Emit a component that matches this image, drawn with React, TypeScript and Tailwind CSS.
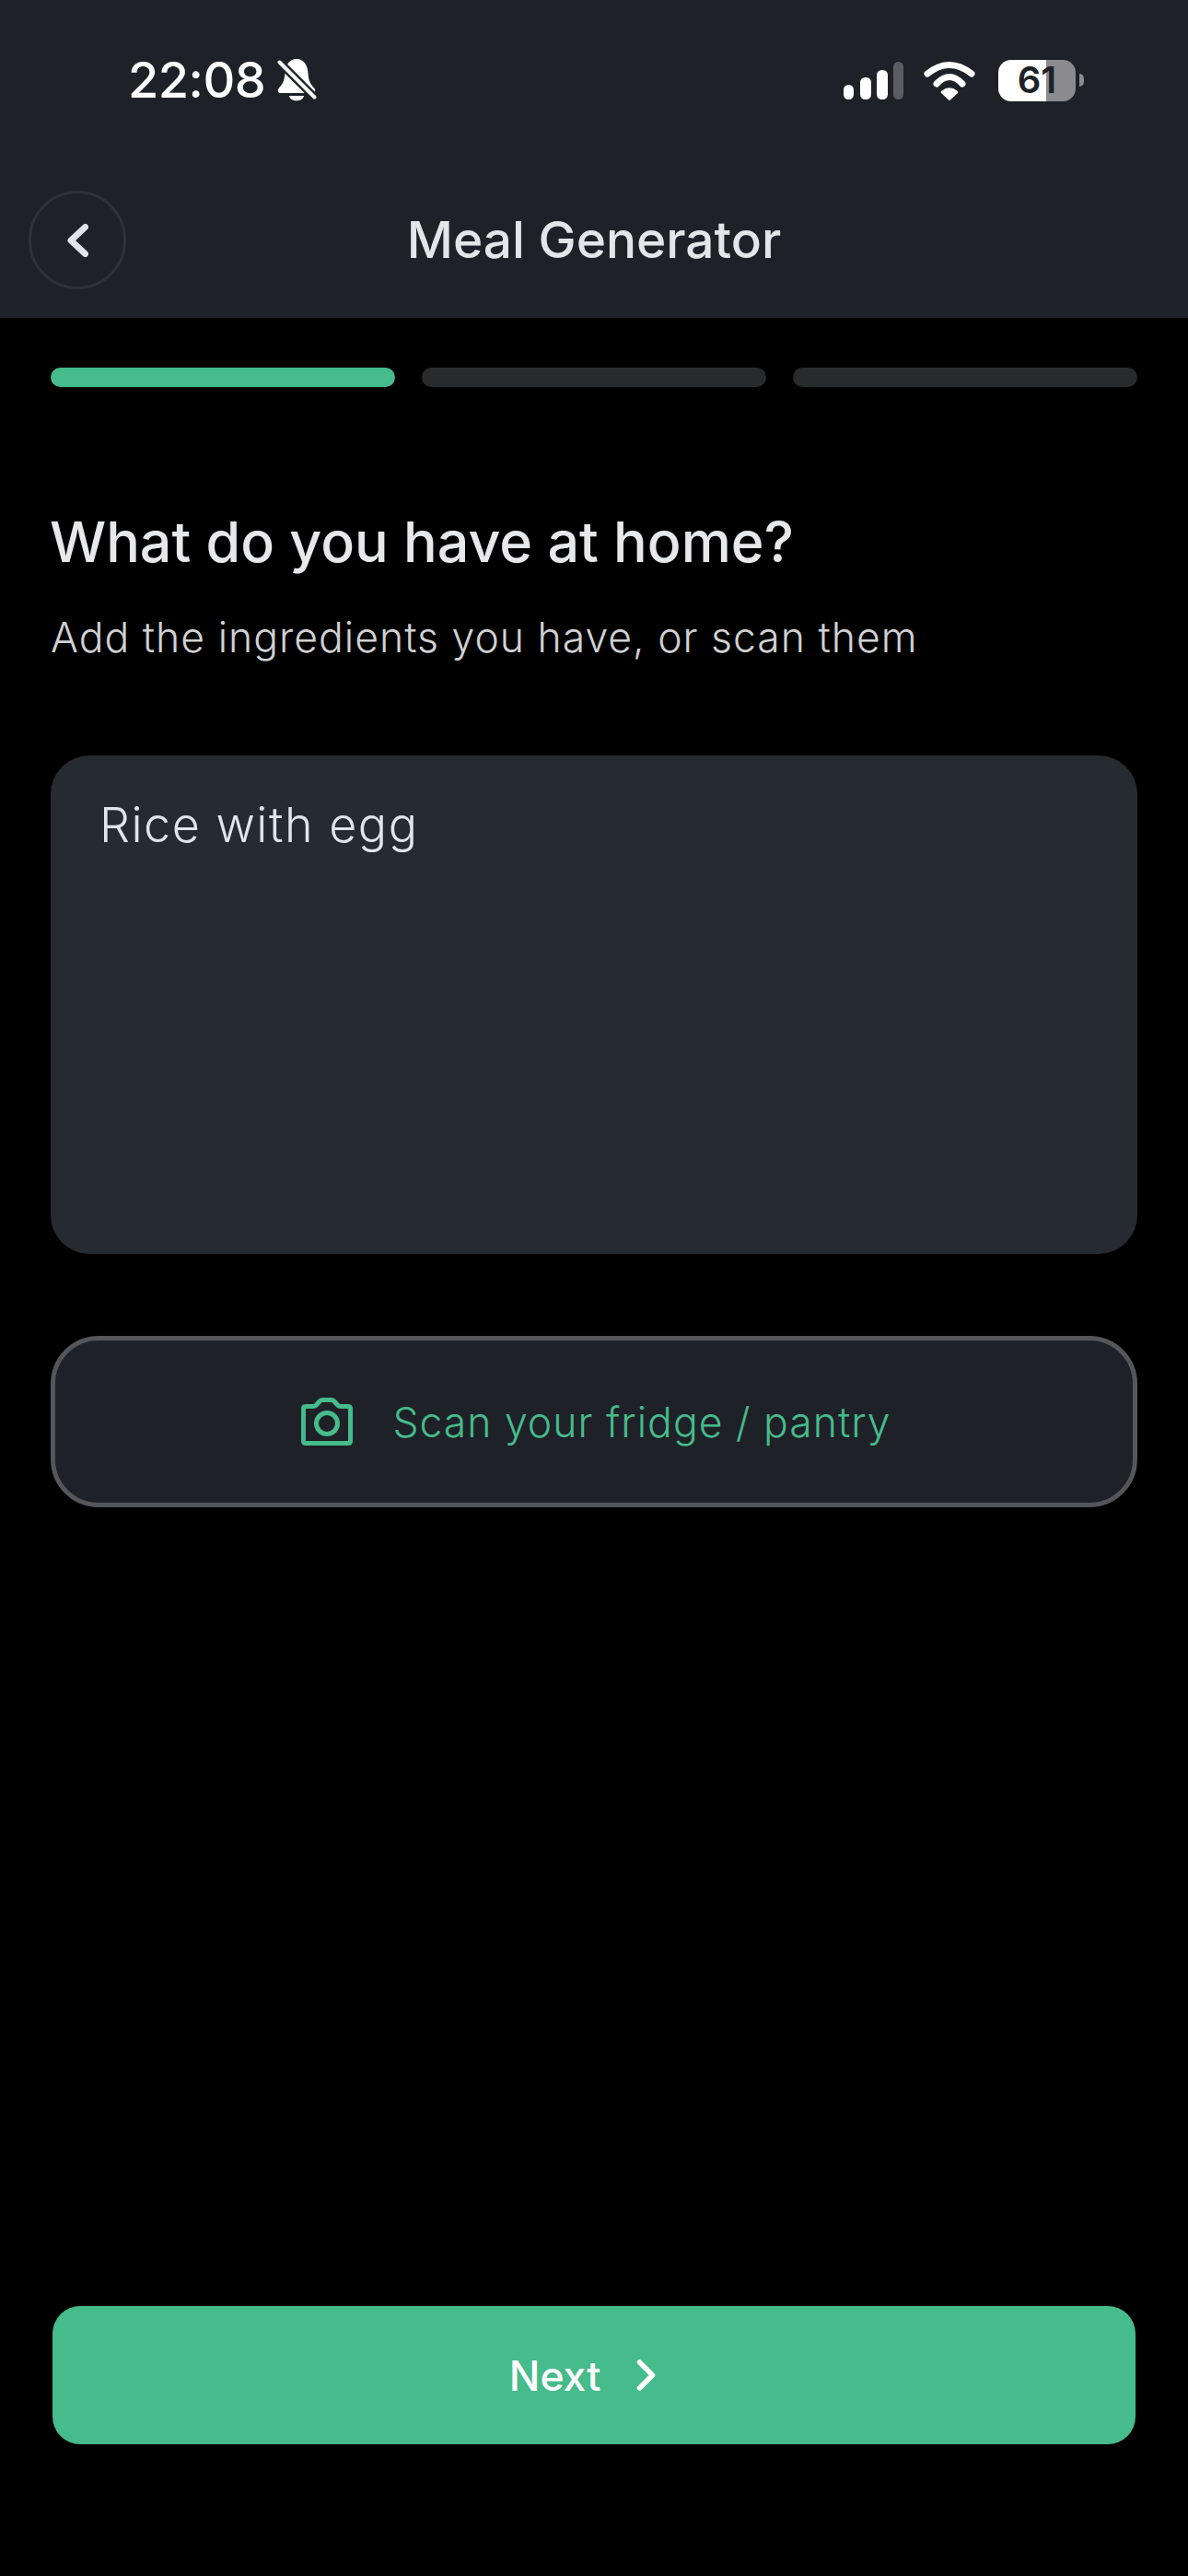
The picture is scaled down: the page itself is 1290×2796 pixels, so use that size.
import React from "react";

const font = { fontFamily: "Inter, 'Noto Sans', sans-serif" };

function MutedBell() {
  return (
    <svg width="44" height="48" viewBox="0 0 44 48" className="ml-[12px] shrink-0">
      <path d="M22 1C14 1 10 8 9.5 16C9 26 6 29 2.5 33C1 35 2 38 4 38H40C42 38 43 35 41.5 33C38 29 35 26 34.5 16C34 8 30 1 22 1Z" fill="#fff" />
      <path d="M14 41H30C29 48 15 48 14 41Z" fill="#fff" />
      <path d="M1 2L44 45" stroke="#1e2128" strokeWidth="9" />
      <path d="M3.5 4.5L41.5 42.5" stroke="#fff" strokeWidth="4" strokeLinecap="round" />
    </svg>
  );
}

function Signal() {
  return (
    <svg width="65" height="41" viewBox="0 0 65 41" className="shrink-0">
      <rect x="0" y="25" width="11" height="16" rx="5.5" fill="#fff" />
      <rect x="18" y="17" width="12" height="24" rx="5.5" fill="#fff" />
      <rect x="36" y="9" width="12" height="32" rx="5.5" fill="#fff" />
      <rect x="54" y="0" width="11" height="41" rx="5.5" fill="#5b5d63" />
    </svg>
  );
}

function Wifi() {
  return (
    <svg width="56" height="43" viewBox="0 0 56 43" fill="none" className="mr-[3px] shrink-0">
      <path d="M4 14Q28 -5 52 14" stroke="#fff" strokeWidth="7" strokeLinecap="round" />
      <path d="M14 25Q28 10 42 25" stroke="#fff" strokeWidth="7" strokeLinecap="round" />
      <path d="M28 41L20.5 34Q28 28 35.5 34Z" fill="#fff" stroke="#fff" strokeWidth="3.5" strokeLinejoin="round" />
    </svg>
  );
}

function Battery() {
  return (
    <div className="flex items-center shrink-0">
      <div className="flex h-[45px] w-[84px] items-center justify-center rounded-[14px] bg-[linear-gradient(90deg,#ffffff_0%,#ffffff_62%,#8a8a8f_62%,#8a8a8f_100%)] text-[40px] leading-none font-semibold text-[#1e2128]">
        61
      </div>
      <div className="ml-[4px] h-[14px] w-[5px] rounded-r-full bg-[#8a8a8f]" />
    </div>
  );
}

function CameraIcon() {
  return (
    <svg width="56" height="52" viewBox="0 0 56 52" fill="none" className="shrink-0">
      <path
        d="M5 9.5H13Q15 9.5 16.5 8L20 4Q21.5 2.5 23.5 2.5H32.5Q34.5 2.5 36 4L39.5 8Q41 9.5 43 9.5H51Q53.5 9.5 53.5 12V47Q53.5 49.5 51 49.5H5Q2.5 49.5 2.5 47V12Q2.5 9.5 5 9.5Z"
        stroke="#46bb8b"
        strokeWidth="5"
        strokeLinejoin="round"
      />
      <circle cx="28" cy="28" r="11.5" stroke="#46bb8b" strokeWidth="5" />
    </svg>
  );
}

export default function App() {
  return (
    <div className="flex h-[2796px] w-[1290px] flex-col overflow-hidden bg-black" style={font}>
      <header className="h-[345px] shrink-0 bg-[#1e2128]">
        <div className="flex h-[174px] items-center justify-between pl-[139px] pr-[113px]">
          <div className="flex items-center">
            <span className="text-[54px] leading-none font-medium tracking-[-0.5px] text-white">22:08</span>
            <MutedBell />
          </div>
          <div className="flex items-center gap-[22px]">
            <Signal />
            <Wifi />
            <Battery />
          </div>
        </div>
        <div className="mt-[33px] flex items-center justify-between px-[31px]">
          <button className="flex h-[107px] w-[106px] items-center justify-center rounded-full border-[3px] border-[#2e3138]">
            <svg width="23" height="36" viewBox="0 0 23 36" fill="none">
              <path d="M19.5 3.5L4 18L19.5 32.5" stroke="#e2e4e9" strokeWidth="7" strokeLinecap="round" strokeLinejoin="round" />
            </svg>
          </button>
          <h1 className="text-[55px] leading-none font-medium text-[#e4e5e8]">Meal Generator</h1>
          <div className="w-[106px]" />
        </div>
      </header>

      <main className="flex flex-1 flex-col px-[55px] pt-[54px] pb-[143px]">
        <div className="flex gap-[29px]">
          <div className="h-[21px] flex-1 rounded-full bg-[#46bb8b]" />
          <div className="h-[21px] flex-1 rounded-full bg-[#282a2c]" />
          <div className="h-[21px] flex-1 rounded-full bg-[#282a2c]" />
        </div>

        <h2 className="mt-[132px] -ml-[1px] text-[61px] leading-[72px] font-medium text-[#e6e8ea]">What do you have at home?</h2>
        <p className="mt-[42px] text-[44.5px] leading-[52px] font-light tracking-[1px] text-[#d0d1d3]">
          Add the ingredients you have, or scan them
        </p>

        <div className="mt-[102px] h-[541px] rounded-[42px] bg-[#262a31] px-[53px] pt-[46px] text-[52px] leading-[60px] font-light tracking-[1.5px] text-[#e0e4ec]">
          Rice with egg
        </div>

        <button className="mt-[89px] flex h-[186px] items-center justify-center gap-[43px] rounded-[52px] border-[5px] border-[#55565b] bg-[#1e2128] pl-[5px]">
          <CameraIcon />
          <span className="pt-[2px] text-[44.5px] leading-none font-light tracking-[1px] text-[#46bb8b]">Scan your fridge / pantry</span>
        </button>

        <button className="mx-[2px] mt-auto flex h-[150px] items-center justify-center gap-[39px] rounded-[30px] bg-[#46bb8b] pr-[25px]">
          <span className="pt-[2px] text-[44.5px] leading-none font-medium text-white">Next</span>
          <svg width="21" height="34" viewBox="0 0 21 34" fill="none">
            <path d="M3.5 3L17.5 17L3.5 31" stroke="#fff" strokeWidth="5.5" strokeLinecap="round" strokeLinejoin="round" />
          </svg>
        </button>
      </main>
    </div>
  );
}
